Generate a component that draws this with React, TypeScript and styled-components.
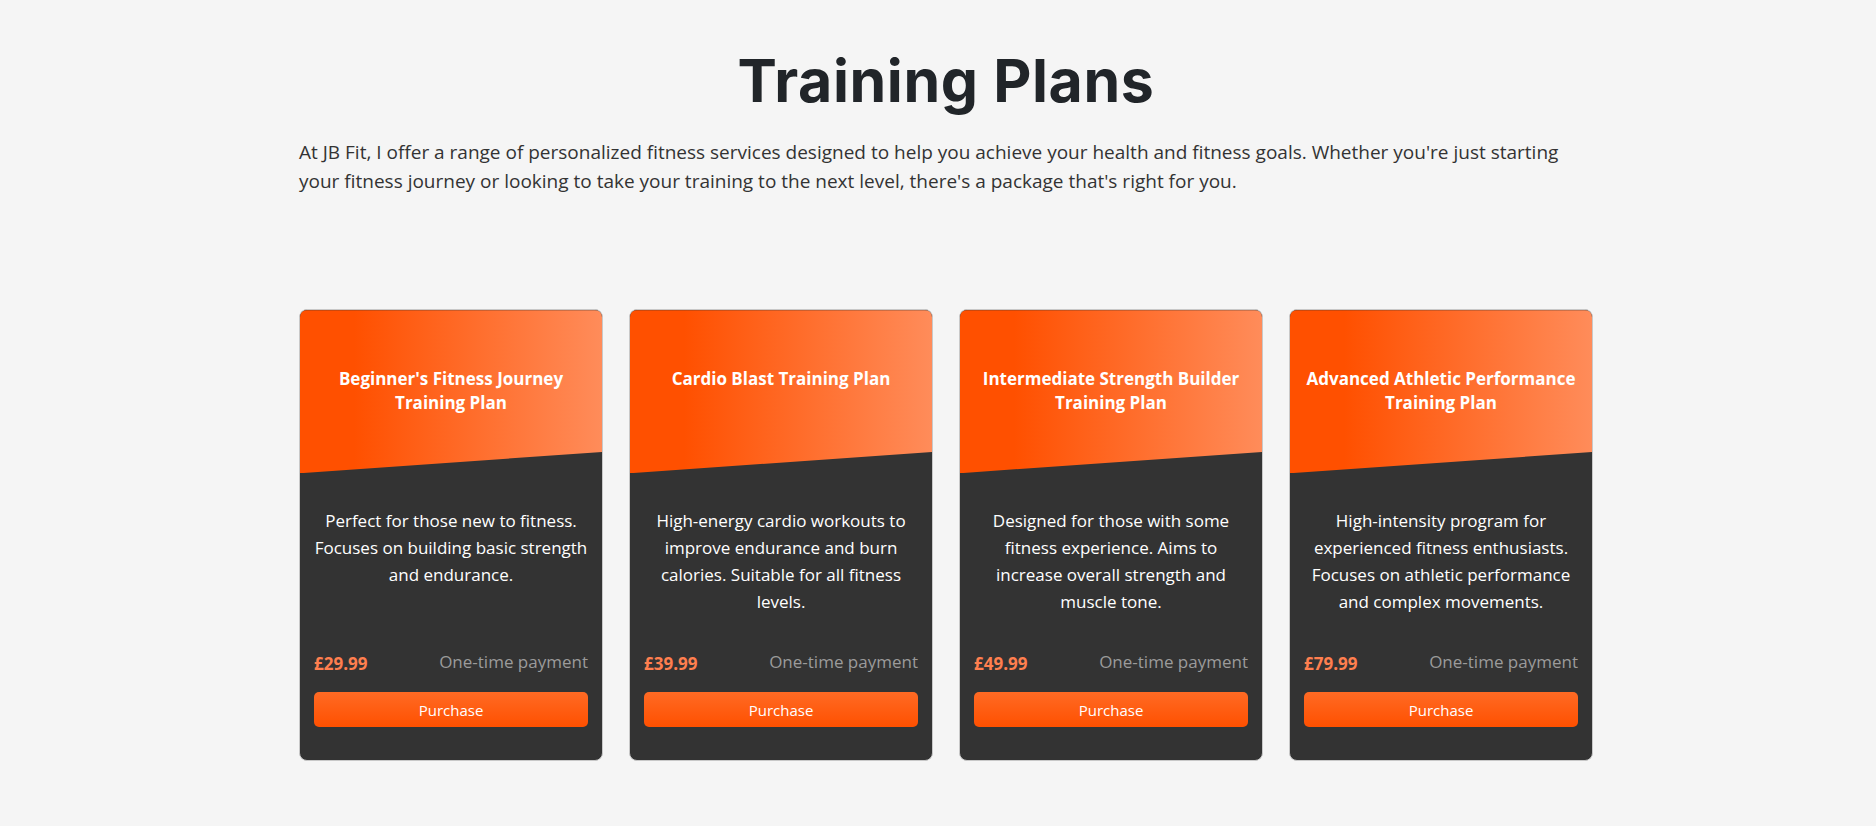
import React from "react";
import styled, { createGlobalStyle } from "styled-components";

const GlobalStyle = createGlobalStyle`
  html, body {
    margin: 0;
    padding: 0;
    background: #f5f5f5;
  }
  body {
    font-family: "Open Sans", "Noto Sans", sans-serif;
    color: #333;
  }
  * { box-sizing: border-box; }
`;

const Page = styled.main`
  padding: 0 0 40px 16px;
`;

const Container = styled.div`
  max-width: 1294px;
  margin: 0 auto;
`;

const Heading = styled.h1`
  margin: 40px 0 0;
  font-family: "Inter", "Noto Sans", sans-serif;
  font-weight: 700;
  font-size: 59px;
  line-height: 82px;
  letter-spacing: 0.6px;
  color: #212529;
  text-align: center;
`;

const Intro = styled.p`
  margin: 16px 0 0;
  max-width: 1280px;
  font-size: 19px;
  line-height: 28.6px;
  color: #333;
`;

const Grid = styled.div`
  margin-top: 114px;
  display: grid;
  grid-template-columns: repeat(4, 1fr);
  gap: 26px;
`;

const Card = styled.article`
  display: flex;
  flex-direction: column;
  background: #333333;
  border: 1px solid #c8c8c8;
  border-radius: 8px;
  overflow: hidden;
  padding-bottom: 33px;
`;

const CardHeader = styled.div`
  height: 163px;
  padding: 57px 12px 0;
  background: linear-gradient(to right, #ff5000 18%, #ff8c5a 100%);
  clip-path: polygon(0 0, 100% 0, 100% 87%, 0 100%);
`;

const CardTitle = styled.h2`
  margin: 0;
  font-size: 17px;
  line-height: 24px;
  font-weight: 700;
  color: #ffffff;
  text-align: center;
`;

const Description = styled.p`
  flex: 1;
  margin: 0;
  padding: 34px 10px 34px;
  font-size: 17px;
  line-height: 27px;
  color: #ffffff;
  text-align: center;
`;

const PriceRow = styled.div`
  display: flex;
  justify-content: space-between;
  align-items: center;
  padding: 0 14px 0 14px;
  height: 24px;
`;

const Price = styled.span`
  font-size: 17px;
  font-weight: 700;
  color: #ff7f4f;
  margin-top: 4px;
`;

const PaymentNote = styled.span`
  font-size: 17px;
  color: #9b9b9b;
`;

const PurchaseButton = styled.button`
  margin: 19px 14px 0;
  height: 35px;
  border: none;
  border-radius: 5px;
  background: linear-gradient(to bottom, #ff6a24, #ff5000);
  color: #ffffff;
  font-family: "Open Sans", "Noto Sans", sans-serif;
  font-size: 15px;
  cursor: pointer;
`;

type Plan = {
  title: string;
  lines: string[];
  price: string;
};

const plans: Plan[] = [
  {
    title: "Beginner's Fitness Journey Training Plan",
    lines: ["Perfect for those new to fitness.", "Focuses on building basic strength", "and endurance."],
    price: "£29.99",
  },
  {
    title: "Cardio Blast Training Plan",
    lines: ["High-energy cardio workouts to", "improve endurance and burn", "calories. Suitable for all fitness", "levels."],
    price: "£39.99",
  },
  {
    title: "Intermediate Strength Builder Training Plan",
    lines: ["Designed for those with some", "fitness experience. Aims to", "increase overall strength and", "muscle tone."],
    price: "£49.99",
  },
  {
    title: "Advanced Athletic Performance Training Plan",
    lines: [
      "High-intensity program for",
      "experienced fitness enthusiasts.",
      "Focuses on athletic performance",
      "and complex movements.",
    ],
    price: "£79.99",
  },
];

export default function App() {
  return (
    <>
      <GlobalStyle />
      <Page>
        <Container>
          <Heading>Training Plans</Heading>
          <Intro>
            At JB Fit, I offer a range of personalized fitness services designed to help you
            achieve your health and fitness goals. Whether you're just starting your fitness
            journey or looking to take your training to the next level, there's a package
            that's right for you.
          </Intro>
          <Grid>
            {plans.map((p) => (
              <Card key={p.title}>
                <CardHeader>
                  <CardTitle>{p.title}</CardTitle>
                </CardHeader>
                <Description>
                  {p.lines.map((line, i) => (
                    <React.Fragment key={i}>
                      {line}
                      {i < p.lines.length - 1 && <br />}
                    </React.Fragment>
                  ))}
                </Description>
                <PriceRow>
                  <Price>{p.price}</Price>
                  <PaymentNote>One-time payment</PaymentNote>
                </PriceRow>
                <PurchaseButton>Purchase</PurchaseButton>
              </Card>
            ))}
          </Grid>
        </Container>
      </Page>
    </>
  );
}
